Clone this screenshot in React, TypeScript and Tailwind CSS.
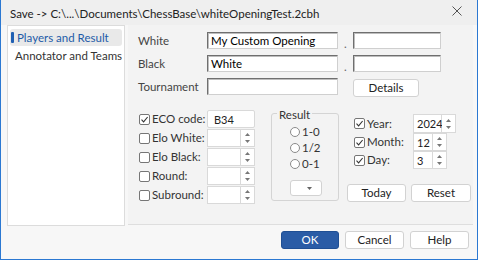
import React from "react";

function Check({ on }: { on?: boolean }) {
  return (
    <span className="w-[11px] h-[11px] border border-[#767676] rounded-[2px] bg-white flex items-center justify-center shrink-0">
      {on && (
        <svg width="9" height="9" viewBox="0 0 9 9">
          <path d="M1.5 4.6 L3.6 6.8 L7.6 2" fill="none" stroke="#333" strokeWidth="1.1" />
        </svg>
      )}
    </span>
  );
}

function SpinArrows() {
  return (
    <div className="flex flex-col items-center gap-[4px]">
      <svg width="5" height="3" viewBox="0 0 5 3">
        <path d="M0 3 L2.5 0 L5 3Z" fill="#777" />
      </svg>
      <svg width="5" height="3" viewBox="0 0 5 3">
        <path d="M0 0 L2.5 3 L5 0Z" fill="#777" />
      </svg>
    </div>
  );
}

function Spinner({ value, w }: { value?: string; w: string }) {
  return (
    <div className="flex h-full">
      <div className={`${w} h-full bg-white border border-[#d9d9d9] flex items-center pl-[3px] text-[11px] text-[#222]`}>{value}</div>
      <div className="w-[14px] h-full bg-white border border-l-0 border-[#d9d9d9] flex items-center justify-center">
        <SpinArrows />
      </div>
    </div>
  );
}

function Sunken({ value, w }: { value?: string; w: string }) {
  return (
    <div
      className={`${w} h-[17px] bg-white border border-t-[#6f6f6f] border-l-[#6f6f6f] border-r-[#cfcfcf] border-b-[#cfcfcf] shadow-[inset_1px_1px_0_#bdbdbd] flex items-center pl-[3px] text-black whitespace-nowrap`}
    >
      {value}
    </div>
  );
}

function Btn({ children, w, primary }: { children: React.ReactNode; w: string; primary?: boolean }) {
  return (
    <button
      className={
        primary
          ? `${w} h-[18px] rounded-[3px] bg-[#2a5ca6] border border-[#1f4f94] text-white flex items-center justify-center`
          : `${w} h-[18px] rounded-[3px] bg-white border border-[#d2d2d2] text-[#222] flex items-center justify-center`
      }
    >
      {children}
    </button>
  );
}

export default function App() {
  const lower = [
    { label: "ECO code:", on: true },
    { label: "Elo White:" },
    { label: "Elo Black:" },
    { label: "Round:" },
    { label: "Subround:" },
  ];
  return (
    <div className="w-[478px] h-[260px] bg-[#f7f7f7] border-x border-b border-[#2b78d2] flex flex-col font-['Lato',sans-serif] text-[11.5px] leading-none text-[#333] whitespace-nowrap">
      {/* Title bar */}
      <div className="h-[25px] bg-[#efefef] flex items-center justify-between pl-[9px] pr-[15px]">
        <span className="text-[11.5px] text-[#222] pt-[3px]">Save -&gt; C:\...\Documents\ChessBase\whiteOpeningTest.2cbh</span>
        <svg width="10" height="10" viewBox="0 0 10 10" className="mb-[3px]">
          <path d="M0.5 0.5 L9.5 9.5 M9.5 0.5 L0.5 9.5" stroke="#555" strokeWidth="1" />
        </svg>
      </div>

      {/* Body */}
      <div className="h-[201px] flex gap-[3px] pl-[6px] pr-[4px]">
        <div className="w-[118px] h-full bg-white border border-[#dcdcdc] pt-[3px] px-[2px] flex flex-col">
          <div className="h-[17px] bg-[#e9e9e9] rounded-[3px] flex items-center">
            <span className="w-[3px] h-[11px] bg-[#1f5fb3] rounded-[1px] ml-[1px]" />
            <span className="ml-[3px] text-[#1d5ba8]">Players and Result</span>
          </div>
          <div className="h-[19px] flex items-center pl-[5px] text-[#333]">Annotator and Teams</div>
        </div>

        <div className="flex-1 h-[200px] bg-[#f3f3f3] border-b border-[#dedede] pl-[10px] pt-[7px] flex flex-col">
          {/* Players */}
          <div className="flex flex-col gap-[6px]">
            <div className="flex items-center h-[17px]">
              <span className="w-[69px] text-[#444]">White</span>
              <Sunken w="w-[131px]" value="My Custom Opening" />
              <span className="w-[15px] self-end pl-[6px] text-[#666]">.</span>
              <Sunken w="w-[88px]" />
            </div>
            <div className="flex items-center h-[17px]">
              <span className="w-[69px] text-[#444]">Black</span>
              <Sunken w="w-[131px]" value="White" />
              <span className="w-[15px] self-end pl-[6px] text-[#666]">.</span>
              <Sunken w="w-[88px]" />
            </div>
            <div className="flex items-start h-[17px]">
              <span className="w-[69px] text-[#444] pt-[3px]">Tournament</span>
              <Sunken w="w-[131px]" />
              <div className="ml-[15px] mt-[1px]">
                <Btn w="w-[66px]">Details</Btn>
              </div>
            </div>
          </div>

          {/* Lower */}
          <div className="flex mt-[15px]">
            <div className="flex flex-col gap-px w-[117px]">
              {lower.map((r, i) => (
                <div key={r.label} className="flex items-center h-[18px]">
                  <div className="w-[69px] flex items-center gap-[2px] pl-[1px]">
                    <Check on={r.on} />
                    <span className="text-[#333]">{r.label}</span>
                  </div>
                  {i === 0 ? (
                    <div className="w-[48px] h-full bg-white border border-[#d9d9d9] rounded-[2px] flex items-center pl-[6px] text-[11px] text-[#222]">B34</div>
                  ) : (
                    <Spinner w="w-[34px]" />
                  )}
                </div>
              ))}
            </div>

            <fieldset className="ml-[16px] -mt-[3px] w-[68px] h-[94px] border border-[#d4d4d4] rounded-[3px] p-0">
              <legend className="ml-[5px] px-[2px] text-[#333] leading-[12px]">
                <span className="relative top-[2px]">Result</span>
              </legend>
              <div className="flex flex-col gap-[4px] mt-[7px] pl-[18px]">
                {["1-0", "1/2", "0-1"].map((t) => (
                  <div key={t} className="flex items-center gap-[2px] h-[12px]">
                    <span className="w-[10px] h-[10px] rounded-full border border-[#8a8a8a] bg-white" />
                    <span className="text-[#333]">{t}</span>
                  </div>
                ))}
              </div>
              <div className="mt-[10px] ml-[18px] w-[32px] h-[16px] bg-white border border-[#d2d2d2] rounded-[3px] flex items-center justify-end pr-[9px]">
                <svg width="5" height="3" viewBox="0 0 5 3">
                  <path d="M0 0 L2.5 3 L5 0Z" fill="#666" />
                </svg>
              </div>
            </fieldset>

            <div className="ml-[8px] flex flex-col">
              <div className="flex flex-col pl-[7px] mt-[4px]">
                {[
                  { l: "Year:", v: "2024", w: "w-[29px]", h: "h-[19px]" },
                  { l: "Month:", v: "12", w: "w-[20px]", h: "h-[18px]" },
                  { l: "Day:", v: "3", w: "w-[20px]", h: "h-[18px]" },
                ].map((r) => (
                  <div key={r.l} className={`flex items-center ${r.h}`}>
                    <div className="w-[59px] flex items-center gap-[2px]">
                      <Check on />
                      <span className="text-[#333]">{r.l}</span>
                    </div>
                    <Spinner w={r.w} value={r.v} />
                  </div>
                ))}
              </div>
              <div className="flex gap-[5px] mt-[15px]">
                <Btn w="w-[59px]">Today</Btn>
                <Btn w="w-[60px]">Reset</Btn>
              </div>
            </div>
          </div>
        </div>
      </div>

      {/* Footer */}
      <div className="flex justify-end gap-[6px] pt-[5px] pr-[8px]">
        <Btn w="w-[58px]" primary>
          OK
        </Btn>
        <Btn w="w-[59px]">Cancel</Btn>
        <Btn w="w-[59px]">Help</Btn>
      </div>
    </div>
  );
}
